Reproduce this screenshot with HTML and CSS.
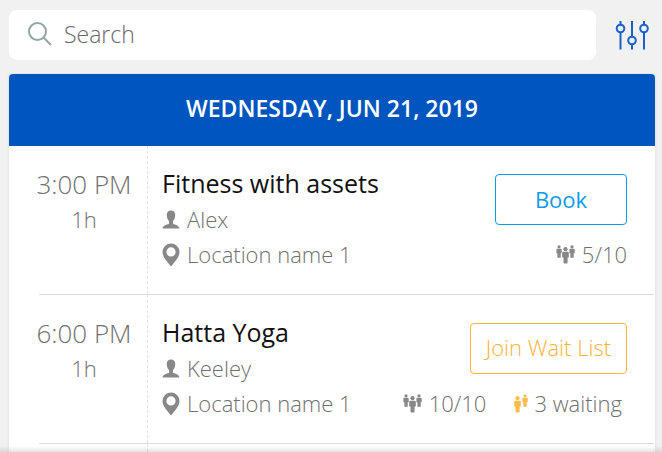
FILE: index.html
```html
<!DOCTYPE html>
<html lang="en">
<head>
<meta charset="utf-8">
<meta name="viewport" content="width=device-width, initial-scale=1">
<title>Class schedule</title>
<link rel="stylesheet" href="styles.css">
</head>
<body>
<svg class="defs" aria-hidden="true">
  <symbol id="person" viewBox="0 0 18 19">
    <path d="M9 .5C6.300.5 4.800 2.200 4.800 4.800C4.800 8 5.600 9.800 7 11V13.500C6.500 14.800 1 14.500.5 18.500H17.500C17 14.500 11.500 14.800 11 13.500V11C12.400 9.800 13.200 8 13.200 4.800C13.200 2.200 11.700.5 9 .5Z"/>
  </symbol>
  <symbol id="pin" viewBox="0 0 18 24">
    <path fill-rule="evenodd" d="M9 .5A8.500 8.500 0 0 0 .5 9C.5 14 5 18.500 9 23.500C13 18.500 17.500 14 17.500 9A8.500 8.500 0 0 0 9 .5ZM9 4.300A4.600 4.600 0 1 1 9 13.500A4.600 4.600 0 0 1 9 4.300Z"/>
  </symbol>
  <symbol id="figure-small" viewBox="0 0 6 14">
    <circle cx="3" cy="1.800" r="1.600"/>
    <path d="M1.300 3.800H4.700Q5.700 3.800 5.700 4.800V8.300H4.700V12.700H1.400V8.300H.4V4.800Q.4 3.800 1.300 3.800Z"/>
  </symbol>
  <symbol id="figure" viewBox="0 0 7 17">
    <circle cx="3.500" cy="2.200" r="2.100"/>
    <path d="M1.300 4.800H5.700Q6.800 4.800 6.800 6V10.500H5.600V15.500Q5.600 16.500 4.600 16.500H2.500Q1.500 16.500 1.500 15.500V10.500H.2V6Q.2 4.800 1.300 4.800Z"/>
  </symbol>
  <symbol id="group" viewBox="0 -1 20 20">
    <use href="#figure-small" x="0" y="0" width="6" height="14"/>
    <use href="#figure-small" x="13" y="0" width="6" height="14"/>
    <use href="#figure" x="6" y="2" width="7" height="17"/>
  </symbol>
  <symbol id="pair" viewBox="0 -1 14 20">
    <use href="#figure-small" x="8" y="0" width="6" height="14"/>
    <use href="#figure" x="0" y="2" width="7" height="17"/>
  </symbol>
</svg>

<header class="toolbar">
  <label class="search">
    <svg class="search-icon" viewBox="0 0 24 24" aria-hidden="true"><circle cx="9.500" cy="9.500" r="8.500"/><path d="M15.500 15.500L23 23"/></svg>
    <input type="search" placeholder="Search" aria-label="Search">
  </label>
  <button class="filter" type="button" aria-label="Filter">
    <svg viewBox="0 0 34 30" aria-hidden="true"><path d="M5.500 1V4.500M5.500 12.500V29.500M17 1V16.500M17 24.500V29.500M29 1V4.500M29 12.500V29.500"/><circle cx="5.500" cy="8.500" r="3.800"/><circle cx="17" cy="20.500" r="3.800"/><circle cx="29" cy="8.500" r="3.800"/></svg>
  </button>
</header>

<main class="schedule">
  <h1 class="date">WEDNESDAY, JUN 21, 2019</h1>

  <article class="session">
    <div class="when">
      <time class="start">3:00 PM</time>
      <span class="length">1h</span>
    </div>
    <div class="info">
      <h2 class="title">Fitness with assets</h2>
      <p class="detail"><svg class="person" aria-hidden="true"><use href="#person"/></svg>Alex</p>
      <p class="detail"><svg class="pin" aria-hidden="true"><use href="#pin"/></svg>Location name 1</p>
    </div>
    <div class="actions">
      <button class="action book" type="button">Book</button>
      <div class="counts">
        <span class="count"><svg class="group" aria-hidden="true"><use href="#group"/></svg>5/10</span>
      </div>
    </div>
  </article>

  <article class="session">
    <div class="when">
      <time class="start">6:00 PM</time>
      <span class="length">1h</span>
    </div>
    <div class="info">
      <h2 class="title">Hatta Yoga</h2>
      <p class="detail"><svg class="person" aria-hidden="true"><use href="#person"/></svg>Keeley</p>
      <p class="detail"><svg class="pin" aria-hidden="true"><use href="#pin"/></svg>Location name 1</p>
    </div>
    <div class="actions">
      <button class="action wait" type="button">Join Wait List</button>
      <div class="counts">
        <span class="count"><svg class="group" aria-hidden="true"><use href="#group"/></svg>10/10</span>
        <span class="count waiting"><svg class="pair" aria-hidden="true"><use href="#pair"/></svg>3 waiting</span>
      </div>
    </div>
  </article>

  <div class="rest"></div>
</main>
</body>
</html>
```
FILE: styles.css
```css
* {
  box-sizing: border-box;
}

body {
  display: flex;
  flex-direction: column;
  gap: 14px;
  min-height: 100vh;
  margin: 0;
  padding: 10px 7px 0 9px;
  background: #f1f1f1;
  color: #707070;
  font-family: "Open Sans", "Noto Sans", sans-serif;
  font-size: 22px;
  font-weight: 300;
  line-height: 30px;
}

body::after {
  content: "";
  position: fixed;
  inset: auto 0 0;
  height: 6px;
  background: linear-gradient(transparent, rgba(0, 0, 0, 0.1));
}

h1,
h2,
p {
  margin: 0;
}

button,
input {
  font: inherit;
}

.defs {
  position: absolute;
  width: 0;
  height: 0;
}

.toolbar {
  display: flex;
  align-items: center;
  gap: 19px;
  padding-right: 6px;
}

.search {
  display: flex;
  flex: 1;
  align-items: center;
  gap: 12px;
  height: 50px;
  padding: 0 19px 2px;
  border-radius: 8px;
  background: #fff;
}

.search-icon {
  width: 24px;
  height: 24px;
  fill: none;
  stroke: #95a5a6;
  stroke-width: 2;
}

.search input {
  flex: 1;
  min-width: 0;
  padding: 0;
  border: 0;
  outline: 0;
  background: none;
  color: #6c6768;
  font-size: 23px;
}

.search input::placeholder {
  color: #6c6768;
  opacity: 1;
}

.filter {
  padding: 0;
  border: 0;
  background: none;
}

.filter svg {
  display: block;
  width: 34px;
  height: 30px;
  fill: none;
  stroke: #1a5fca;
  stroke-width: 2;
}

.schedule {
  display: flex;
  flex: 1;
  flex-direction: column;
  border-radius: 4px 4px 0 0;
  background: #fff;
  box-shadow: 0 0 3px rgba(0, 0, 0, 0.1);
}

.date {
  padding: 19px 0 23px;
  border-radius: 4px 4px 0 0;
  background: #0055be;
  color: #fff;
  font-size: 23px;
  font-weight: 600;
  text-align: center;
}

.session {
  display: flex;
  margin: 0 1px 0 30px;
  border-bottom: 1px solid #dcdcdc;
}

.when {
  display: flex;
  flex-direction: column;
  align-items: center;
  width: 109px;
  padding: 20px 18px 0 0;
  border-right: 1px dashed #e2e2e2;
}

.start {
  font-size: 26px;
  line-height: 36px;
  white-space: nowrap;
}

.length {
  line-height: 35px;
}

.info {
  flex: 1;
  padding: 20px 0 22px 14px;
}

.title {
  color: #111;
  font-size: 25px;
  font-weight: 400;
  line-height: 35px;
}

.detail {
  display: flex;
  align-items: center;
  gap: 7px;
  line-height: 36px;
}

.detail + .detail {
  line-height: 35px;
}

svg {
  flex: none;
  fill: #888;
}

.person {
  width: 18px;
  height: 19px;
}

.pin {
  width: 18px;
  height: 24px;
}

.actions {
  display: flex;
  flex-direction: column;
  align-items: flex-end;
  gap: 14px;
  padding: 28px 27px 20px 0;
}

.action {
  height: 51px;
  padding: 0 15px 4px;
  border: 1px solid currentColor;
  border-radius: 4px;
  background: #fff;
}

.book {
  width: 132px;
  padding-bottom: 2px;
  color: #0a9ceb;
  font-weight: 400;
}

.wait {
  color: #ffb236;
}

.counts {
  display: flex;
  gap: 28px;
}

.count {
  display: flex;
  align-items: center;
  gap: 6px;
}

.group {
  width: 20px;
  height: 20px;
}

.pair {
  width: 14px;
  height: 20px;
  fill: #ffbb49;
}

.waiting {
  padding-right: 5px;
}

.rest {
  flex: 1;
  width: 139px;
  border-right: 1px dashed #e2e2e2;
}
```
